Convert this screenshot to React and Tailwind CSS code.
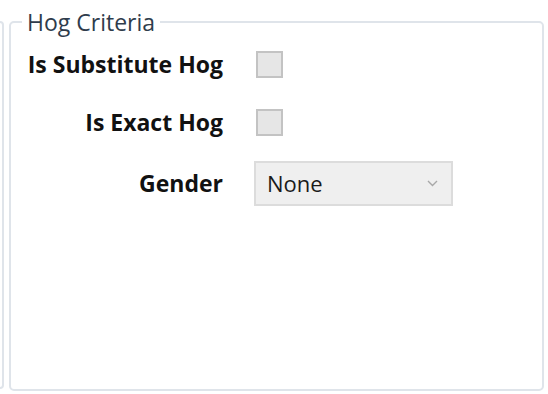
import React from 'react';

const Checkbox = () => (
  <div className="ml-[2px] h-[27px] w-[27px] border-2 border-[#c3c3c3] bg-[#e6e6e6]"></div>
);

const Row = ({ label, children, className = '' }) => (
  <div className={`flex items-center ${className}`}>
    <div className="w-[212px] whitespace-nowrap text-right text-[23px] leading-[27px] font-bold text-[#111]">{label}</div>
    <div className="ml-[31px]">{children}</div>
  </div>
);

const App = () => {
  return (
    <div
      className="flex h-[394px] w-[548px] bg-white pt-[9px]"
      style={{ fontFamily: '"Open Sans", "Noto Sans", sans-serif' }}
    >
      {/* edge of the neighbouring group box */}
      <div className="mt-[12px] mb-[5px] w-[4px] rounded-r-[4px] border-y-2 border-r-2 border-[#dfe4ea]"></div>

      <fieldset className="ml-[5px] mb-[3px] w-[535px] rounded-[5px] border-2 border-[#dfe4ea]">
        <legend className="ml-[11px] px-[5px] text-[23px] leading-[26px] text-[#2f3c4c]">Hog Criteria</legend>

        <div className="flex flex-col pt-[16px]">
          <Row label="Is Substitute Hog">
            <Checkbox />
          </Row>
          <Row label="Is Exact Hog" className="mt-[31px]">
            <Checkbox />
          </Row>
          <Row label="Gender" className="mt-[25px]">
            <div className="flex h-[45px] w-[199px] items-center justify-between border-2 border-[#dcdcdc] bg-[#efefef] pl-[11px] pr-[13px]">
              <span className="text-[22px] text-[#1a1a1a]">None</span>
              <svg width="11" height="7" viewBox="0 0 11 7" fill="none">
                <path d="M1 1l4.5 4.5L10 1" stroke="#a8a8a8" strokeWidth="1.4" />
              </svg>
            </div>
          </Row>
        </div>
      </fieldset>
    </div>
  );
};

export default App;
